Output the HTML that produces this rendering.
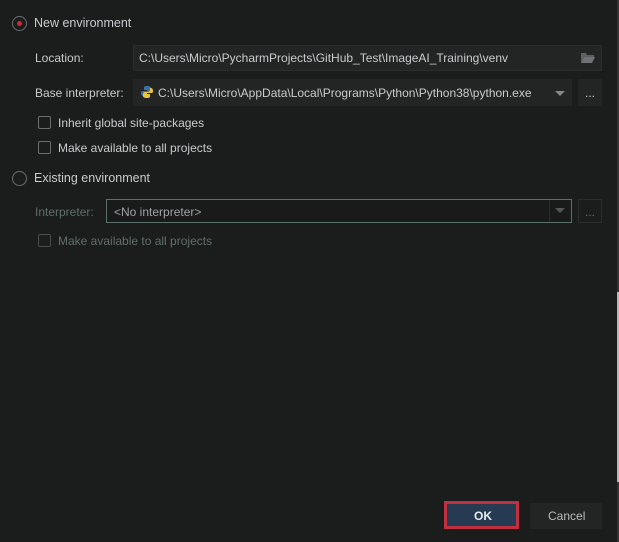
<!DOCTYPE html>
<html><head><style>
body{margin:0;width:619px;height:542px;background:#1b1c1c;font-family:"Liberation Sans",sans-serif;font-size:12px;color:#c9ccce;position:relative;overflow:hidden}
.a{position:absolute;white-space:nowrap}
.f{position:absolute;background:#232424;border:1px solid #2b2c2c;box-sizing:border-box}
.cb{position:absolute;width:13px;height:13px;border:1px solid #6b6e70;border-radius:2px;box-sizing:border-box}
.rd{position:absolute;width:15px;height:15px;border:1px solid #6b6e70;border-radius:50%;box-sizing:border-box}
.tri{position:absolute;width:0;height:0;border-left:5px solid transparent;border-right:5px solid transparent;border-top:5px solid #85888a}
</style></head><body>
<div class="rd" style="left:12px;top:16px"><div style="position:absolute;left:4px;top:4px;width:5px;height:5px;border-radius:50%;background:#d0283a"></div></div>
<div class="a" style="left:34px;top:16px;font-size:12.5px">New environment</div>
<div class="a" style="left:35px;top:51px">Location:</div>
<div class="f" style="left:133px;top:45px;width:469px;height:26px"></div>
<div class="a" style="left:139px;top:51px">C:\Users\Micro\PycharmProjects\GitHub_Test\ImageAI_Training\venv</div>
<svg class="a" style="left:580px;top:52px" width="16" height="12"><path d="M1 1h5l1 2h7v2H4L1 11z" fill="#5d6062"/><path d="M4 5h11l-3 6H1z" fill="#6f7274"/></svg>
<div class="a" style="left:35px;top:86px">Base interpreter:</div>
<div class="f" style="left:133px;top:79px;width:439px;height:27px;border:none"></div>
<svg class="a" style="left:140px;top:85px" width="14" height="14"><path d="M7 1C4 1 4 2 4 3v2h3v1H2C1 6 1 8 1 8c0 2 1 3 2 3h1V9c0-1 1-2 2-2h3c1 0 2-1 2-2V3c0-1-1-2-4-2z" fill="#3a70a8"/><path d="M7 13c3 0 3-1 3-2V9H7V8h5c1 0 1-2 1-2 0-2-1-3-2-3h-1v2c0 1-1 2-2 2H5c-1 0-2 1-2 2v2c0 1 1 2 4 2z" fill="#e8c43a"/></svg>
<div class="a" style="left:158px;top:86px">C:\Users\Micro\AppData\Local\Programs\Python\Python38\python.exe</div>
<div class="tri" style="left:555px;top:91px"></div>
<div class="f" style="left:578px;top:79px;width:24px;height:27px;border:none"></div>
<div class="a" style="left:585px;top:86px">...</div>
<div class="cb" style="left:38px;top:116px"></div>
<div class="a" style="left:58px;top:116px">Inherit global site-packages</div>
<div class="cb" style="left:38px;top:141px"></div>
<div class="a" style="left:58px;top:141px">Make available to all projects</div>
<div class="rd" style="left:12px;top:171px"></div>
<div class="a" style="left:34px;top:171px;font-size:12.5px">Existing environment</div>
<div class="a" style="left:35px;top:205px;color:#5f706c">Interpreter:</div>
<div class="f" style="left:106px;top:199px;width:466px;height:24px;background:#191a1a;border-color:#5a7068"></div>
<div class="a" style="left:114px;top:205px;color:#9ea3a6">&lt;No interpreter&gt;</div>
<div class="a" style="left:549px;top:200px;width:1px;height:22px;background:#2b2c2c"></div>
<div class="tri" style="left:555px;top:208px;border-top-color:#55585a"></div>
<div class="f" style="left:578px;top:199px;width:24px;height:24px;background:#1b1c1c"></div>
<div class="a" style="left:585px;top:205px;color:#6f7274">...</div>
<div class="cb" style="left:38px;top:234px;border-color:#4a4d4f"></div>
<div class="a" style="left:58px;top:234px;color:#5f706c">Make available to all projects</div>
<div class="a" style="left:444px;top:501px;width:75px;height:28px;box-sizing:border-box;border:3px solid #c0303f;background:#263b52"></div>
<div class="a" style="left:474px;top:509px;font-weight:bold;color:#e8ecef">OK</div>
<div class="a" style="left:530px;top:503px;width:72px;height:26px;background:#232424"></div>
<div class="a" style="left:548px;top:509px;color:#b9bcbe">Cancel</div>
<div class="a" style="left:617px;top:0;width:2px;height:542px;background:#333"></div>
<div class="a" style="left:617px;top:292px;width:2px;height:190px;background:#b8b8b8"></div>
</body></html>
